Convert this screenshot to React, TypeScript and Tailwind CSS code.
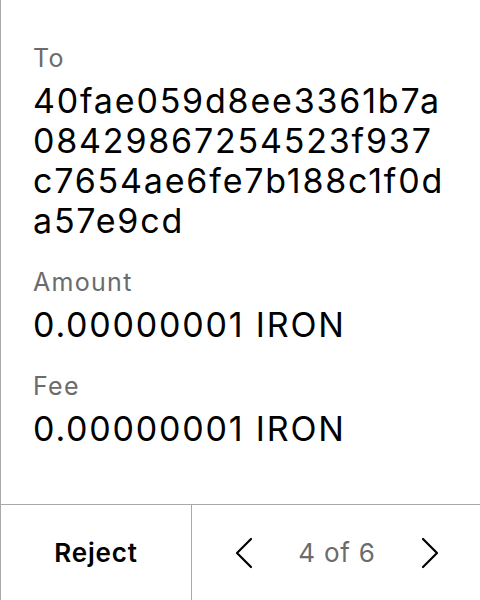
import React from 'react'

const address = '40fae059d8ee3361b7a08429867254523f937c7654ae6fe7b188c1f0da57e9cd'

const ChevronLeft = () => (
  <svg width="20" height="32" viewBox="0 0 20 32" fill="none" stroke="#000" strokeWidth="2.2" strokeLinecap="round" strokeLinejoin="round">
    <path d="M17 2 L3 16 L17 30" />
  </svg>
)

const ChevronRight = () => (
  <svg width="20" height="32" viewBox="0 0 20 32" fill="none" stroke="#000" strokeWidth="2.2" strokeLinecap="round" strokeLinejoin="round">
    <path d="M3 2 L17 16 L3 30" />
  </svg>
)

const Field = ({ label, value, breakAll }: { label: string; value: string; breakAll?: boolean }) => (
  <div className="flex flex-col">
    <span className="text-[25px] leading-[32px] tracking-[1.3px] text-[#6b6b6b]">{label}</span>
    <span className={`mt-[7px] text-[34px] leading-[40px] tracking-[1.8px] text-black ${breakAll ? 'break-all' : ''}`}>
      {value}
    </span>
  </div>
)

export default function App() {
  return (
    <div
      className="w-[480px] h-[600px] flex flex-col bg-white border-l border-[#a9a9a9]"
      style={{ fontFamily: 'Inter, "Noto Sans", sans-serif' }}
    >
      <div className="flex-1 flex flex-col gap-[25px] pl-8 pr-[35px] pt-[42px]">
        <Field label="To" value={address} breakAll />
        <Field label="Amount" value="0.00000001 IRON" />
        <Field label="Fee" value="0.00000001 IRON" />
      </div>
      <div className="h-[96px] flex border-t border-[#a9a9a9]">
        <button className="w-[191px] flex items-center justify-center border-r border-[#a9a9a9] text-[26px] font-semibold tracking-[0.8px] text-black">
          Reject
        </button>
        <div className="flex-1 flex items-center justify-between pl-[42px] pr-[40px]">
          <button className="flex items-center">
            <ChevronLeft />
          </button>
          <span className="text-[26px] tracking-[0.8px] text-[#6b6b6b]">4 of 6</span>
          <button className="flex items-center">
            <ChevronRight />
          </button>
        </div>
      </div>
    </div>
  )
}
